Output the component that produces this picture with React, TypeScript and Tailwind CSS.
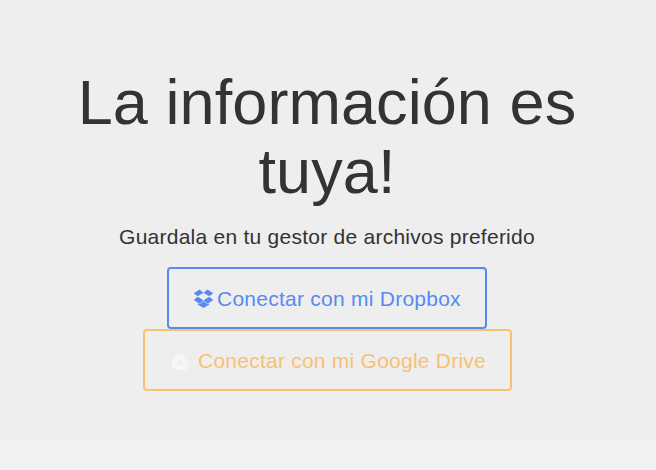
function DropboxIcon() {
  return (
    <svg viewBox="0 0 1792 1792" className="relative top-[-1px] h-[21px] w-[21px] shrink-0" fill="currentColor">
      <path d="M402 829l494 305-342 285-490-319zm986 555v108l-490 293v1l-1-1-1 1v-1l-489-293v-108l147 96 342-284v-2l1 1 1-1v2l343 284zm-834-1175l342 285-494 304-338-270zm836 620l338 271-489 319-343-285zm-152-620l490 319-338 270-495-304z" />
    </svg>
  );
}

function DriveIcon() {
  return (
    <svg viewBox="0 0 18 16" className="relative top-[2px] h-4 w-[18px] shrink-0">
      <g fill="#f7f7f7">
        <path d="M5.400 .8L8.400 6 3.200 15.300Q2.600 15.600 2.200 15L.2 11.500Q0 11 .2 10.500z" />
        <path d="M6.200 .4Q6.500 .1 7 .1h4Q11.700 .1 12.100 .7l5.300 9.400h-5.600z" />
        <path d="M6.800 10.900h10.900Q17.900 11.300 17.600 11.800l-1.800 3.300Q15.400 15.800 14.700 15.800H4.100z" />
      </g>
    </svg>
  );
}

export default function App() {
  return (
    <div className="min-h-screen bg-[#f1f1f1] font-['Liberation_Sans',Arial,sans-serif] text-[#333333]">
      <section className="flex h-[439px] flex-col items-center bg-[#eeeeee] pr-[2px] pt-[68px]">
        <h1 className="w-[540px] text-center text-[63px] leading-[69px] tracking-[0.07px]">La información es tuya!</h1>
        <p className="mt-[19px] text-[21px] leading-[24px] tracking-[0.25px]">Guardala en tu gestor de archivos preferido</p>
        <button className="mt-[18px] flex h-[62px] w-[320px] items-center rounded-[4px] border-2 border-[#568af2] pl-[24px] text-[21px] tracking-[0.25px] text-[#568af2]">
          <DropboxIcon />
          <span className="ml-[3px] whitespace-nowrap pt-[2px]">Conectar con mi Dropbox</span>
        </button>
        <button className="flex h-[62px] w-[369px] items-center rounded-[4px] border-2 border-[#f7c173] pl-[26px] text-[21px] tracking-[0.24px] text-[#f7c173]">
          <DriveIcon />
          <span className="ml-[9.500px] whitespace-nowrap pt-[2px]">Conectar con mi Google Drive</span>
        </button>
      </section>
    </div>
  );
}
